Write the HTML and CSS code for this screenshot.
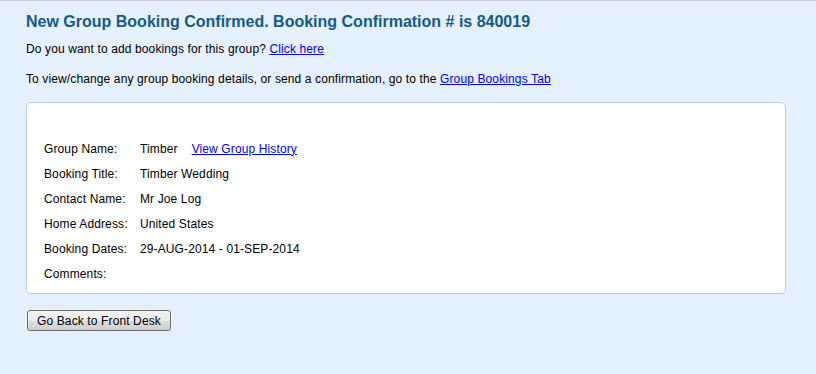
FILE: index.html
```html
<!DOCTYPE html>
<html>
<head>
<meta charset="utf-8">
<link rel="stylesheet" href="styles.css">
</head>
<body>
<div class="page">
  <h1 class="title">New Group Booking Confirmed. Booking Confirmation # is 840019</h1>
  <p class="line">Do you want to add bookings for this group? <a href="#">Click here</a></p>
  <p class="line second">To view/change any group booking details, or send a confirmation, go to the <a href="#">Group Bookings Tab</a></p>
  <div class="card">
    <div class="row"><span class="label">Group Name:</span><span class="value">Timber</span><a class="history" href="#">View Group History</a></div>
    <div class="row"><span class="label">Booking Title:</span><span class="value">Timber Wedding</span></div>
    <div class="row"><span class="label">Contact Name:</span><span class="value">Mr Joe Log</span></div>
    <div class="row"><span class="label">Home Address:</span><span class="value">United States</span></div>
    <div class="row"><span class="label">Booking Dates:</span><span class="value">29-AUG-2014 - 01-SEP-2014</span></div>
    <div class="row"><span class="label">Comments:</span><span class="value"></span></div>
  </div>
  <button class="back" type="button">Go Back to Front Desk</button>
</div>
</body>
</html>
```

FILE: styles.css
```css
html, body {
  margin: 0;
  padding: 0;
  height: 100%;
}
body {
  background: #e5f0fd;
  font-family: "Liberation Sans", Arial, sans-serif;
  font-size: 12px;
  letter-spacing: 0.12px;
  color: #000;
  border-top: 1px solid #c8cdd3;
  box-sizing: border-box;
}
.page {
  padding: 10px 30px 0 26px;
}
.title {
  margin: 0;
  font-size: 16px;
  line-height: 22px;
  font-weight: bold;
  letter-spacing: 0;
  color: #155a8a;
}
.line {
  margin: 8px 0 0;
  line-height: 16px;
}
.line.second {
  margin-top: 14px;
}
a {
  color: #0000ee;
  text-decoration: underline;
}
.card {
  margin-top: 15px;
  background: #fff;
  border: 1px solid #b7cce4;
  border-radius: 5px;
  padding: 33px 17px 7px;
}
.row {
  display: flex;
  height: 25px;
  align-items: center;
}
.label {
  width: 96px;
}
.value {
  margin-right: 14px;
}
.back {
  display: block;
  margin-top: 16px;
  margin-left: 1px;
  width: 144px;
  height: 21px;
  padding: 0;
  font-family: "Liberation Sans", Arial, sans-serif;
  font-size: 12px;
  letter-spacing: 0.12px;
  color: #000;
  border: 1px solid #707070;
  border-radius: 3px;
  background: linear-gradient(#f2f2f2 0%, #ebebeb 50%, #dddddd 51%, #cfcfcf 100%);
}
```
